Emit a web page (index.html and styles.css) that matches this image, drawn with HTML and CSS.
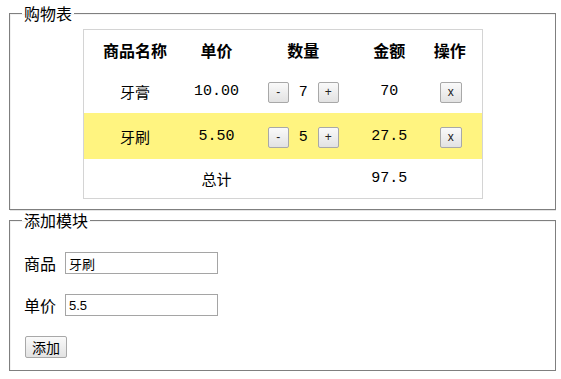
FILE: index.html
```html
<!DOCTYPE html>
<html lang="zh">
<head>
<meta charset="utf-8">
<title>购物表</title>
<link rel="stylesheet" href="styles.css">
</head>
<body>
<fieldset class="box box-cart">
  <legend class="box-title">购物表</legend>
  <table class="cart">
    <colgroup>
      <col class="c-name"><col class="c-price"><col class="c-qty"><col class="c-sum"><col class="c-op">
    </colgroup>
    <thead>
      <tr class="row-head">
        <th>商品名称</th><th>单价</th><th>数量</th><th>金额</th><th>操作</th>
      </tr>
    </thead>
    <tbody>
      <tr class="row-item">
        <td>牙膏</td>
        <td class="num">10.00</td>
        <td><span class="qty"><button class="btn">-</button><span class="num">7</span><button class="btn">+</button></span></td>
        <td class="num">70</td>
        <td><button class="btn btn-x">x</button></td>
      </tr>
      <tr class="row-item row-hl">
        <td>牙刷</td>
        <td class="num">5.50</td>
        <td><span class="qty"><button class="btn">-</button><span class="num">5</span><button class="btn">+</button></span></td>
        <td class="num">27.5</td>
        <td><button class="btn btn-x">x</button></td>
      </tr>
      <tr class="row-total">
        <td></td>
        <td>总计</td>
        <td></td>
        <td class="num">97.5</td>
        <td></td>
      </tr>
    </tbody>
  </table>
</fieldset>
<fieldset class="box box-add">
  <legend class="box-title">添加模块</legend>
  <div class="form-row">
    <label class="form-label">商品</label>
    <input class="form-input" type="text" value="牙刷">
  </div>
  <div class="form-row">
    <label class="form-label">单价</label>
    <input class="form-input" type="text" value="5.5">
  </div>
  <div class="form-actions">
    <button class="btn-add">添加</button>
  </div>
</fieldset>
</body>
</html>
```
FILE: styles.css
```css
html, body {
  background: #fff;
}
body {
  margin: 5px 5px 0 9px;
  font-family: "Noto Sans CJK SC", "Noto Sans", sans-serif;
  color: #000;
}
.box {
  margin: 0;
  border: 1px solid #7f7f7f;
  box-shadow: 1px 1px 0 #e4e4e4, inset 1px 1px 0 #f2f2f2;
  min-width: 0;
}
.box-title {
  font-size: 16px;
  line-height: 16px;
  padding: 0 2px;
  margin-left: -2px;
}
.box-cart {
  padding: 8px 14px 10px;
}
.box-add {
  margin-top: 2px;
  padding: 24px 14px 12px;
}
.cart {
  width: 400px;
  margin: 0 auto;
  border-collapse: collapse;
  border: 1px solid #d4d4d4;
  font-size: 15px;
}
.c-name { width: 104px; }
.c-price { width: 60px; }
.c-qty { width: 114px; }
.c-sum { width: 58px; }
.c-op { width: 64px; }
.cart th, .cart td {
  padding: 0;
  text-align: center;
  vertical-align: middle;
  font-weight: normal;
}
.cart th {
  font-weight: bold;
  font-size: 16px;
  height: 39px;
}
.row-item td {
  height: 44px;
}
.row-hl td {
  height: 46px;
  background: #fff480;
}
.row-total td {
  height: 39px;
}
.num {
  font-family: "Liberation Mono", "Noto Sans CJK SC", monospace;
  font-size: 15px;
}
.qty {
  display: inline-flex;
  align-items: center;
  gap: 10px;
}
.btn {
  width: 21px;
  height: 21px;
  padding: 0;
  font-family: "Liberation Sans", sans-serif;
  font-size: 12px;
  line-height: 19px;
  color: #222;
  background: linear-gradient(#fafafa, #e2e2e2);
  border: 1px solid #a8a8a8;
  border-radius: 2px;
}
.btn-x {
  width: 22px;
  margin-left: 2px;
}
.form-row {
  display: flex;
  align-items: center;
  height: 22px;
  margin-bottom: 20px;
}
.form-label {
  width: 41px;
  font-size: 16px;
  line-height: 22px;
}
.form-input {
  box-sizing: border-box;
  width: 153px;
  height: 22px;
  margin: 0;
  padding: 0 3px;
  border: 1px solid #a5a5a5;
  font-family: "Liberation Sans", "Noto Sans CJK SC", sans-serif;
  font-size: 13px;
  color: #000;
}
.form-actions {
  display: flex;
  height: 22px;
  padding-left: 1px;
}
.btn-add {
  box-sizing: border-box;
  width: 42px;
  height: 22px;
  padding: 0;
  font-family: "Noto Sans CJK SC", sans-serif;
  font-size: 14px;
  line-height: 20px;
  color: #000;
  background: linear-gradient(#fafafa, #e2e2e2);
  border: 1px solid #a8a8a8;
  border-radius: 2px;
}
```
